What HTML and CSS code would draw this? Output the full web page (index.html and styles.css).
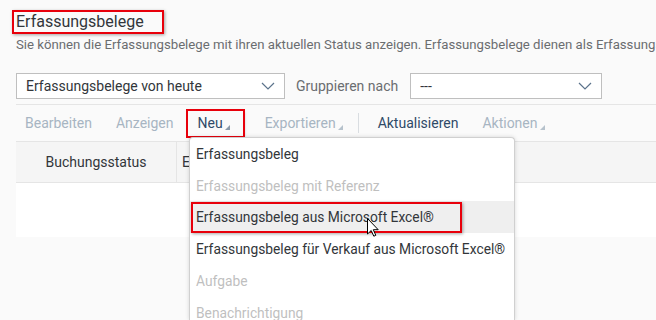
FILE: index.html
```
<!DOCTYPE html>
<html>
<head>
	<title>Erfassungsbelege</title>
	<meta http-equiv="Content-Type" content="text/html; charset=UTF-8">
	<link rel="stylesheet" href="styles.css">
</head>
<body>
	<div class="page">
		<div class="head">
			<h1 class="title"><span class="title-mark">Erfassungsbelege</span></h1>
			<div class="subtitle">Sie können die Erfassungsbelege mit ihren aktuellen Status anzeigen. Erfassungsbelege dienen als Erfassungsvorlage für Buchungen.</div>
		</div>
		<div class="filters">
			<div class="select select-view">
				<span>Erfassungsbelege von heute</span>
				<svg class="chev" width="14" height="8" viewBox="0 0 14 8"><path d="M1 1 L7 7 L13 1" fill="none" stroke="#5b738b" stroke-width="1.2"/></svg>
			</div>
			<span class="filter-label">Gruppieren nach</span>
			<div class="select select-group">
				<span>---</span>
				<svg class="chev" width="14" height="8" viewBox="0 0 14 8"><path d="M1 1 L7 7 L13 1" fill="none" stroke="#5b738b" stroke-width="1.2"/></svg>
			</div>
		</div>
		<div class="toolbar">
			<span class="tb-btn off">Bearbeiten</span>
			<span class="tb-btn off">Anzeigen</span>
			<span class="tb-btn menu-btn on marked">Neu<svg class="tri" width="5" height="5" viewBox="0 0 5 5"><path d="M5 0 L5 5 L0 5 Z" fill="#8a9aaa"/></svg></span>
			<span class="tb-btn menu-btn off">Exportieren<svg class="tri" width="5" height="5" viewBox="0 0 5 5"><path d="M5 0 L5 5 L0 5 Z" fill="#b6c2cc"/></svg></span>
			<span class="tb-sep"></span>
			<span class="tb-btn on">Aktualisieren</span>
			<span class="tb-btn menu-btn off">Aktionen<svg class="tri" width="5" height="5" viewBox="0 0 5 5"><path d="M5 0 L5 5 L0 5 Z" fill="#b6c2cc"/></svg></span>
		</div>
		<div class="table">
			<div class="thead">
				<div class="th th-status">Buchungsstatus</div>
				<div class="th">Erfassungsbeleg</div>
			</div>
			<div class="tbody"></div>
		</div>
	</div>

	<div class="menu">
		<div class="menu-item">Erfassungsbeleg</div>
		<div class="menu-item disabled">Erfassungsbeleg mit Referenz</div>
		<div class="menu-item hover"><span class="item-mark">Erfassungsbeleg aus Microsoft Excel®</span></div>
		<div class="menu-item">Erfassungsbeleg für Verkauf aus Microsoft Excel®</div>
		<div class="menu-item disabled">Aufgabe</div>
		<div class="menu-item disabled">Benachrichtigung</div>
	</div>

	<svg class="cursor" width="12" height="19" viewBox="0 0 12 19"><path d="M0.5 0.5 L0.5 16 L4.2 12.5 L6.8 18.2 L8.8 17.3 L6.3 11.7 L11.2 11.7 Z" fill="#fff" stroke="#000" stroke-width="1"/></svg>
</body>
</html>
```
FILE: styles.css
```
html, body {
	margin: 0;
	padding: 0;
	background: #fafafa;
	font-family: Roboto, "Noto Sans", sans-serif;
	color: #32363a;
	overflow: hidden;
	height: 320px;
}
.page {
	padding-left: 16px;
	overflow: hidden;
}
.head {
	padding-top: 10px;
}
.title {
	margin: 0;
	font-size: 16px;
	font-weight: normal;
	line-height: 24px;
	height: 24px;
}
.title-mark {
	display: inline-block;
	margin-left: -4px;
	padding: 0 18px 0 2px;
	border: 2px solid #e8000b;
	line-height: 20px;
	box-shadow: 1px 1px 3px rgba(0, 0, 0, 0.35);
}
.subtitle {
	font-size: 13.2px;
	color: #6a6d70;
	white-space: nowrap;
	line-height: 20px;
	margin-top: 1px;
}
.filters {
	display: flex;
	align-items: center;
	margin-top: 18px;
	height: 26px;
}
.select {
	box-sizing: border-box;
	height: 26px;
	border: 1px solid #bfbfbf;
	background: #fff;
	display: flex;
	align-items: center;
	justify-content: space-between;
	padding: 0 9px 0 9px;
	font-size: 14px;
}
.select-view {
	width: 269px;
}
.select-group {
	width: 192px;
}
.chev {
	display: block;
}
.filter-label {
	font-size: 14px;
	color: #6a6d70;
	margin: 0 12px 0 11px;
}
.toolbar {
	margin-top: 5px;
	border-top: 1px solid #e5e5e5;
	height: 36px;
	display: flex;
	align-items: center;
}
.tb-btn {
	font-size: 14px;
	padding: 0 9px;
	margin-right: 6px;
	line-height: 25px;
	height: 25px;
	display: flex;
	align-items: flex-end;
}
.menu-btn {
	padding-right: 13px;
	margin-right: 13px;
}
.tb-btn.off {
	color: #a7b5c2;
}
.tb-btn.on {
	color: #2f4a68;
}
.tri {
	display: block;
	margin: 0 0 6px 2px;
}
.marked {
	outline: 2px solid #e8000b;
	box-shadow: 1px 1px 3px rgba(0, 0, 0, 0.35);
}
.tb-sep {
	width: 1px;
	height: 20px;
	background: #d9dde1;
	margin: 0 10px 0 -11px;
}
.thead {
	height: 40px;
	background: #f5f5f5;
	border-top: 1px solid #e5e5e5;
	border-bottom: 1px solid #e5e5e5;
	display: flex;
}
.th {
	font-size: 14px;
	line-height: 40px;
	padding-left: 5px;
}
.th-status {
	width: 160px;
	text-align: center;
	padding-left: 0;
	border-right: 1px solid #e5e5e5;
}
.tbody {
	height: 54px;
	background: #fff;
}
.menu {
	position: absolute;
	left: 189px;
	top: 137px;
	width: 324px;
	height: 182px;
	overflow: hidden;
	background: #fff;
	border: 1px solid #d0d0d0;
	border-bottom: none;
	border-radius: 4px 4px 0 0;
	box-shadow: 0 0 4px rgba(0, 0, 0, 0.15);
}
.menu-item {
	height: 32px;
	line-height: 32px;
	font-size: 13.8px;
	padding-left: 6px;
	white-space: nowrap;
}
.menu-item.disabled {
	color: #bfbfbf;
}
.menu-item.hover {
	background: #efefef;
	margin-top: -1px;
	height: 32px;
}
.item-mark {
	display: inline-block;
	margin-left: -5px;
	padding-left: 3px;
	width: 264px;
	height: 27px;
	line-height: 27px;
	border: 2px solid #e8000b;
	box-shadow: 1px 1px 3px rgba(0, 0, 0, 0.35);
	vertical-align: top;
	margin-top: 1px;
}
.cursor {
	position: absolute;
	left: 367px;
	top: 218px;
}
```
